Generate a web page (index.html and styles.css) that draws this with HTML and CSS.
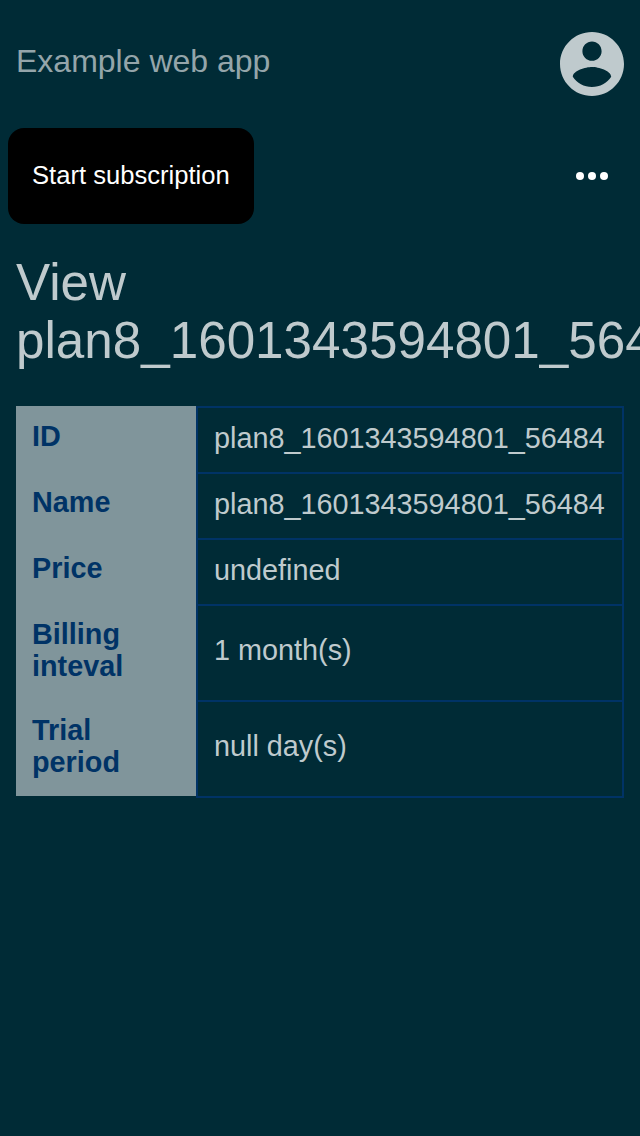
FILE: index.html
```html
<!DOCTYPE html>
<html lang="en">
<head>
<meta charset="utf-8">
<title>Example web app</title>
<link rel="stylesheet" href="styles.css">
</head>
<body>
<header class="header">
  <span class="brand">Example web app</span>
  <svg class="account" viewBox="2 2 20 20"><path fill="currentColor" d="M12 2C6.48 2 2 6.48 2 12s4.480 10 10 10 10-4.480 10-10S17.520 2 12 2zm0 3c1.660 0 3 1.340 3 3s-1.340 3-3 3-3-1.340-3-3 1.340-3 3-3zm0 14.200c-2.500 0-4.710-1.280-6-3.220.03-1.990 4-3.080 6-3.080 1.990 0 5.970 1.090 6 3.080-1.290 1.940-3.500 3.220-6 3.220z"/></svg>
</header>
<nav class="toolbar">
  <a class="button">Start subscription</a>
  <svg class="more" viewBox="0 0 32 8"><g fill="currentColor"><circle cx="4" cy="4" r="4"/><circle cx="16" cy="4" r="4"/><circle cx="28" cy="4" r="4"/></g></svg>
</nav>
<main class="content">
  <h1 class="title">View plan8_1601343594801_56484</h1>
  <table class="details">
    <tbody>
      <tr><th>ID</th><td>plan8_1601343594801_56484</td></tr>
      <tr><th>Name</th><td>plan8_1601343594801_56484</td></tr>
      <tr><th>Price</th><td>undefined</td></tr>
      <tr class="tall"><th>Billing inteval</th><td>1 month(s)</td></tr>
      <tr class="tall"><th>Trial period</th><td>null day(s)</td></tr>
    </tbody>
  </table>
</main>
</body>
</html>
```
FILE: styles.css
```css
* { box-sizing: border-box; }
html { overflow: hidden; }
body {
  margin: 0;
  height: 1136px;
  overflow: hidden;
  background: #002b36;
  color: #bfcacd;
  font-family: "Liberation Sans", Arial, sans-serif;
}
.header {
  display: flex;
  justify-content: space-between;
  height: 128px;
  padding: 32px 16px;
}
.brand { font-size: 32px; line-height: 58px; color: #94a5aa; }
.account { width: 64px; height: 64px; }
.toolbar {
  display: flex;
  align-items: center;
  justify-content: space-between;
  height: 96px;
  padding: 0 32px 0 8px;
}
.button {
  width: 246px;
  height: 96px;
  padding: 0 24px;
  border-radius: 16px;
  background: #000;
  color: #fff;
  font-size: 25.6px;
  line-height: 94px;
  white-space: nowrap;
}
.more { width: 32px; height: 8px; color: #fff; }
.content { padding: 30px 16px 0; }
.title {
  margin: 0 0 36px;
  font-size: 51.2px;
  font-weight: 400;
  line-height: 58px;
}
.details {
  display: block;
  width: 608px;
  font-size: 28.8px;
  line-height: 32px;
}
.details tbody { display: block; }
.details tr { display: grid; grid-template-columns: 180px 428px; height: 66px; }
.details .tall { height: 96px; }
.details th {
  padding: 14px 16px;
  background: #80959b;
  color: #003366;
  text-align: left;
}
.details td {
  display: flex;
  align-items: center;
  height: calc(100% + 2px);
  padding: 0 16px 4px;
  border: 2px solid #003366;
  white-space: nowrap;
}
.details .tall td { padding-bottom: 6px; }
```
